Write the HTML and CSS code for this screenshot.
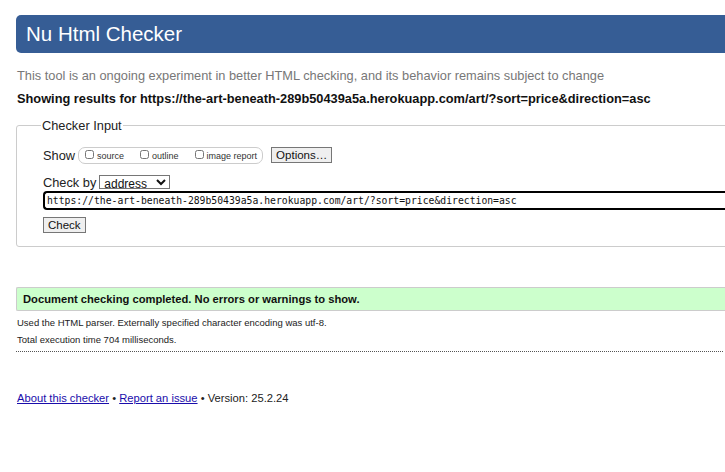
FILE: index.html
```html
<!DOCTYPE html>
<html>
<head>
<meta charset="utf-8">
<title>Nu Html Checker</title>
<link rel="stylesheet" href="styles.css">
</head>
<body>
<div class="page">
  <h1 class="title">Nu Html Checker</h1>
  <p class="intro">This tool is an ongoing experiment in better HTML checking, and its behavior remains subject to change</p>
  <p class="showing">Showing results for https://the-art-beneath-289b50439a5a.herokuapp.com/art/?sort=price&amp;direction=asc</p>
  <fieldset class="checker">
    <legend class="legend">Checker Input</legend>
    <div class="row row-show">
      <span class="lbl">Show</span>
      <fieldset class="opts">
        <label class="opt"><input type="checkbox" class="cb"><span>source</span></label>
        <label class="opt"><input type="checkbox" class="cb"><span>outline</span></label>
        <label class="opt"><input type="checkbox" class="cb"><span>image report</span></label>
      </fieldset>
      <button class="btn options">Options…</button>
    </div>
    <div class="row row-by">
      <span class="lbl">Check by</span>
      <select class="sel"><option>address</option></select>
    </div>
    <div class="urlbox">https://the-art-beneath-289b50439a5a.herokuapp.com/art/?sort=price&amp;direction=asc</div>
    <div class="row row-check"><button class="btn check">Check</button></div>
  </fieldset>
  <p class="success">Document checking completed. No errors or warnings to show.</p>
  <p class="details first">Used the HTML parser. Externally specified character encoding was utf-8.</p>
  <p class="details">Total execution time 704 milliseconds.</p>
  <hr class="dots">
  <p class="footer"><a href="#">About this checker</a> • <a href="#">Report an issue</a> • Version: 25.2.24</p>
</div>
</body>
</html>
```
FILE: styles.css
```css
html, body { margin: 0; padding: 0; overflow: hidden; background: #fff; }
body { font-family: "Liberation Sans", Arial, sans-serif; color: #222; }
.page { width: 760px; padding: 15px 0 0 16px; }
.title {
  margin: 0; height: 38px; background: #365d95; color: #fff;
  font-weight: normal; font-size: 20.5px; line-height: 38px;
  padding-left: 10px; border-radius: 5px 0 0 5px;
}
.intro { margin: 13.5px 0 0 1px; font-size: 12.8px; color: #777; line-height: 17px; }
.showing { margin: 6px 0 0 1px; font-size: 12.8px; font-weight: bold; color: #111; line-height: 17px; }
.checker {
  margin: 11px 0 0 0; padding: 14px 0 13px 26px;
  border: 1px solid #ccc; border-radius: 3px;
}
.legend { font-size: 12.8px; line-height: 15px; padding: 0 1px; margin-left: -2px; color: #222; }
.row { display: flex; align-items: center; }
.lbl { font-size: 12.8px; line-height: 15px; color: #222; }
.opts {
  display: flex; align-items: center; margin: 0 0 0 3px; padding: 0 5px 0 6px;
  border: 1px solid #ccc; border-radius: 7px; height: 15px;
}
.opt { display: flex; align-items: center; font-size: 9px; color: #333; margin-right: 16px; line-height: 11px; }
.opt span { padding-top: 3px; }
.opt:last-child { margin-right: 0; }
.cb { width: 9px; height: 9px; margin: 0 3px 1px 0; }
.btn {
  font-family: "Liberation Sans", Arial, sans-serif; font-size: 11.5px; color: #111;
  background: #efefef; border: 1px solid #767676; border-radius: 0; padding: 0 4px; height: 16px; line-height: 14px;
}
.options { margin-left: 8px; }
.row-by { margin-top: 11px; }
.sel {
  margin-left: 3px; font-family: "Liberation Sans", Arial, sans-serif; font-size: 12px;
  width: 71px; height: 14px; padding: 0; border: 1px solid #767676; border-radius: 0; background: #fff; color: #111;
}
.urlbox {
  margin-top: 1px; height: 15px; border: 2px solid #000; border-right: none; border-radius: 4px 0 0 4px;
  font-family: "DejaVu Sans Mono", "Liberation Mono", monospace; font-size: 9.75px; line-height: 15px;
  padding-left: 2px; color: #111; white-space: nowrap;
}
.row-check { margin-top: 7px; }
.check { padding: 0 4px; }
.success {
  margin: 40px 0 0 0; height: 22px; line-height: 22px; background: #ccffcc;
  border: 1px solid #ccc; border-right: none; border-radius: 2px 0 0 2px;
  font-size: 11.2px; font-weight: bold; color: #111; padding-left: 6px;
}
.details { margin: 5px 0 0 1px; font-size: 9.5px; line-height: 12px; color: #222; }
.details.first { margin-top: 6px; }
.dots { margin: 5px 0 0 0; width: 707px; border: none; border-top: 1px dotted #555; height: 0; }
.footer { margin: 39px 0 0 1px; font-size: 11.2px; line-height: 14px; color: #222; }
.footer a { color: #1a0dab; }
```
